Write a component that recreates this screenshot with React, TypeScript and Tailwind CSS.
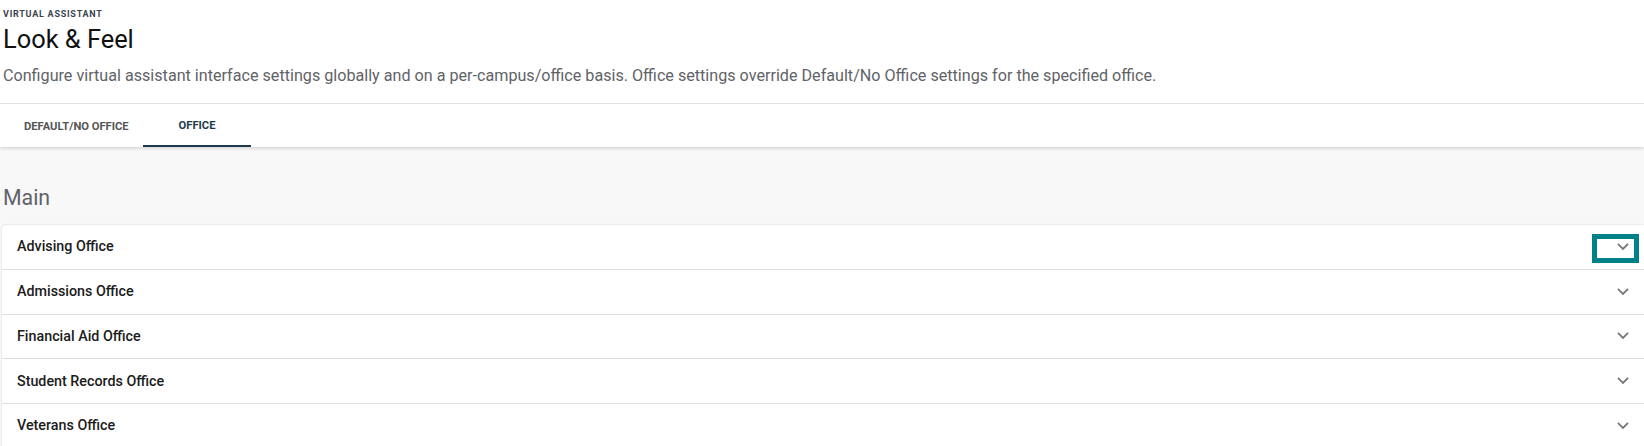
import React from "react";

const offices = [
  "Advising Office",
  "Admissions Office",
  "Financial Aid Office",
  "Student Records Office",
  "Veterans Office",
];

function Chevron() {
  return (
    <svg width="20" height="20" viewBox="0 0 20 20" fill="none">
      <path d="M5.6 7.6 10 12 14.4 7.6" stroke="#767676" strokeWidth="1.8" strokeLinecap="square" strokeLinejoin="miter" />
    </svg>
  );
}

export default function App() {
  return (
    <div className="w-[1644px] h-[446px] overflow-hidden bg-[#f8f8f8] font-['Roboto',sans-serif]">
      <div className="bg-white shadow-[0_2px_3px_rgba(0,0,0,0.12)] relative">
        <div className="px-[3px] pt-[9px] pb-[17px]">
          <div className="text-[9px] leading-[11px] font-bold tracking-[0.75px] text-[#3c4350]">VIRTUAL ASSISTANT</div>
          <h1 className="mt-[4px] text-[25.4px] leading-[30px] text-[#111]">Look &amp; Feel</h1>
          <p className="mt-[12px] text-[16.15px] leading-[20px] text-[#5f6368]">
            Configure virtual assistant interface settings globally and on a per-campus/office basis. Office settings override Default/No Office settings for the specified office.
          </p>
        </div>
        <div className="border-t border-[#e3e3e3] flex h-[44px]">
          <div className="w-[143px] pl-[24px] pt-[3px] flex items-center text-[11.2px] font-bold text-[#555]">DEFAULT/NO OFFICE</div>
          <div className="w-[108px] pt-[3px] flex items-center justify-center text-[11.2px] font-bold text-[#1d3a4c] border-b-2 border-[#1d3a4c]">OFFICE</div>
        </div>
      </div>
      <div className="pt-[37px]">
        <h2 className="px-[3px] text-[21.3px] leading-[28px] text-[#5f6368]">Main</h2>
        <div className="mt-[13px] ml-[2px] bg-white rounded-tl-[4px] shadow-[0_0_2px_rgba(0,0,0,0.18)]">
          {offices.map((o, i) => (
            <div key={o} className="relative h-[44.8px] flex items-center justify-between pl-[15px] pr-[11px] border-b border-[#dedede]">
              <span className="text-[14.3px] font-medium text-[#1b1b1b]">{o}</span>
              <span className="flex items-center">
                <Chevron />
              </span>
              {i === 0 && (
                <div className="absolute left-[1590px] top-[9px] w-[47px] h-[29px] border-[5px] border-[#008089]" />
              )}
            </div>
          ))}
        </div>
      </div>
    </div>
  );
}
